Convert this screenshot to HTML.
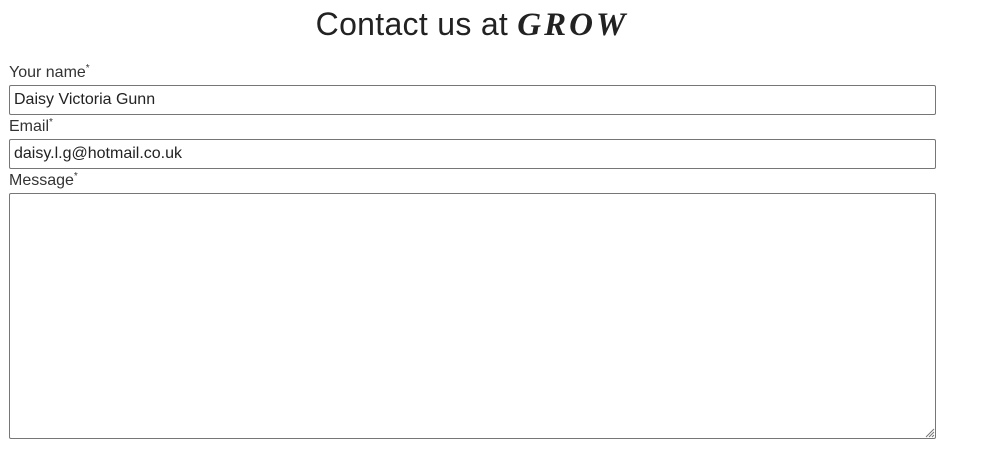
<!DOCTYPE html>
<html><head><meta charset="utf-8"><style>
*{box-sizing:border-box;margin:0;padding:0}
body{width:985px;height:470px;background:#fff;font-family:"Liberation Sans",sans-serif;color:#333;position:relative;overflow:hidden}
h1{position:absolute;top:6px;left:0;width:944px;text-align:center;font-weight:normal;font-size:32px;color:#222;letter-spacing:0.3px}
h1 b{font-family:"Liberation Serif",serif;font-style:italic;font-weight:bold;letter-spacing:3px;font-size:33px}
.l{position:absolute;left:9px;font-size:16px;color:#333}
.l sup{font-size:10px;vertical-align:6px}
.i{position:absolute;left:9px;width:927px;border:1px solid #767676;border-radius:2px;font-size:16px;padding-left:4px;color:#222}
</style></head><body>
<h1>Contact us at <b>GROW</b></h1>
<div class="l" style="top:63px">Your name<sup>*</sup></div>
<div class="i" style="top:85px;height:30px;line-height:28px">Daisy Victoria Gunn</div>
<div class="l" style="top:117px">Email<sup>*</sup></div>
<div class="i" style="top:139px;height:30px;line-height:28px">daisy.l.g@hotmail.co.uk</div>
<div class="l" style="top:171px">Message<sup>*</sup></div>
<div class="i" style="top:193px;height:246px"></div>
<svg style="position:absolute;left:925px;top:428px" width="10" height="10"><path d="M1 9L9 1M4 9L9 4M7 9L9 7" stroke="#777" stroke-width="1"/></svg>
</body></html>
